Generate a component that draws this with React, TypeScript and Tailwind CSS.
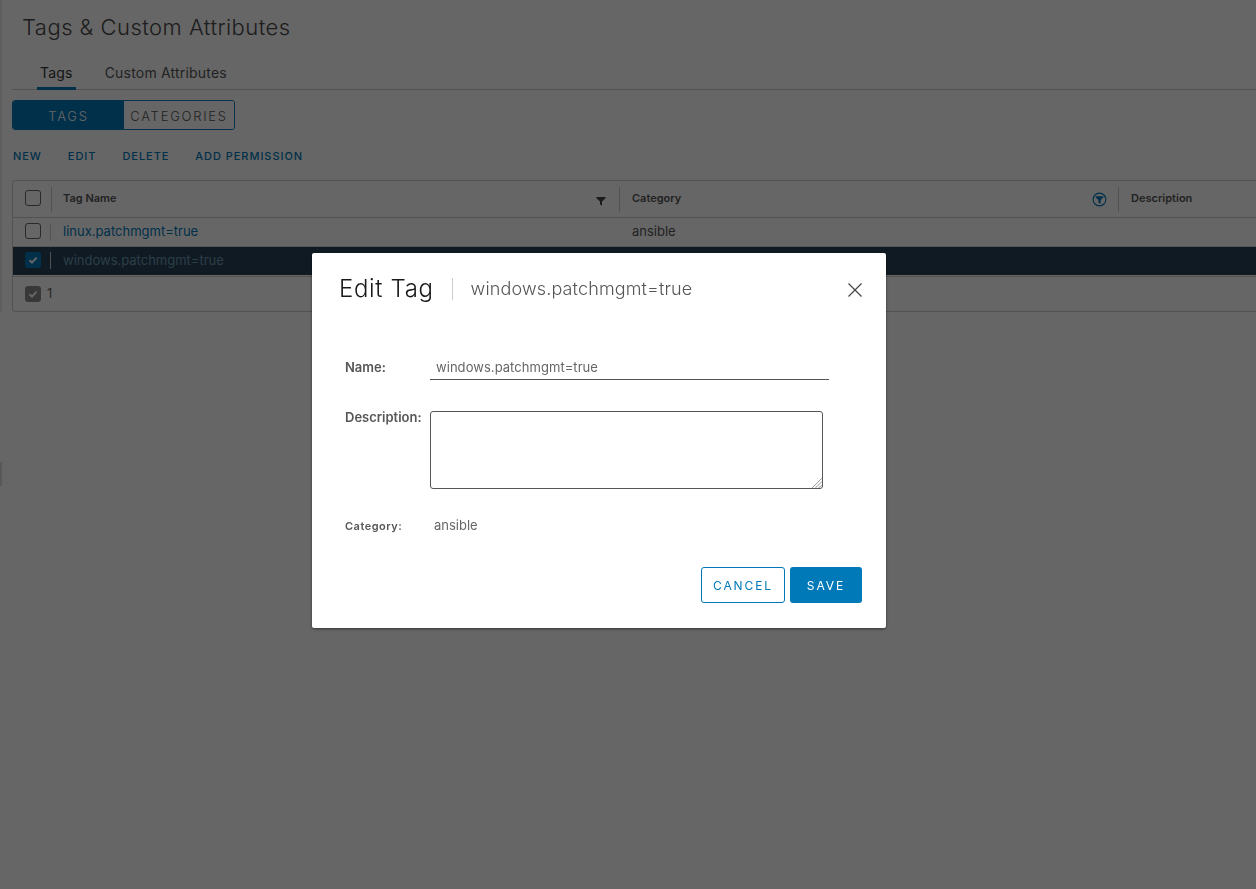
import React from 'react'

const font = { fontFamily: 'Inter, "Liberation Sans", sans-serif' }

function Checkbox({ checked = false, grey = false }: { checked?: boolean; grey?: boolean }) {
  if (!checked) {
    return <div className="h-4 w-4 rounded-[3px] border border-[#666] bg-white" />
  }
  return (
    <div className={`flex h-4 w-4 items-center justify-center rounded-[3px] ${grey ? 'bg-[#8c8c8c]' : 'bg-[#0079b8]'}`}>
      <svg viewBox="0 0 12 12" className="h-3 w-3" fill="none" stroke="#fff" strokeWidth="2">
        <path d="M2.5 6.2 5 8.6 9.6 3.6" />
      </svg>
    </div>
  )
}

function FunnelIcon() {
  return (
    <svg viewBox="0 0 10 10" className="mt-[4px] h-[10px] w-[10px]" fill="#444">
      <path d="M0.5 1h9v1.2L6 5.6V9.5L4 8.4V5.6L0.5 2.2z" />
    </svg>
  )
}

function ActiveFilterIcon() {
  return (
    <svg viewBox="0 0 16 16" className="h-[15px] w-[15px]">
      <circle cx="8" cy="8" r="6.8" fill="none" stroke="#0079b8" strokeWidth="1.2" />
      <path d="M3.8 4.6h8.4v1L9.2 8.6v4L6.8 11.4V8.6L3.8 5.6z" fill="#0079b8" />
    </svg>
  )
}

export default function App() {
  return (
    <div className="relative h-[889px] w-[1256px] overflow-hidden bg-white" style={font}>
      <div className="border-l-2 border-[#eee] pt-[14px] pl-[10px]">
        {/* Header */}
        <h1 className="ml-[10px] text-[22px] leading-[26px] font-light tracking-[0.47px] text-[#4a4a4a]">Tags &amp; Custom Attributes</h1>

        {/* Tabs */}
        <div className="mt-[16px] flex h-[34px] items-start gap-[29px] border-b border-[#ccc] pl-[25px] text-[14px] tracking-[0.2px]">
          <div className="flex h-[34px] flex-col items-center border-b-[3px] border-[#0079b8] px-[3px] pt-[6px] text-[#333]">Tags</div>
          <div className="pt-[6px] text-[#565656]">Custom Attributes</div>
        </div>

        {/* Toggle */}
        <div className="mt-[10px] flex h-[30px] w-[223px] overflow-hidden rounded-[3px] border border-[#0079b8] text-[13px] font-light tracking-[1.75px]">
          <div className="flex w-[111px] items-center justify-center bg-[#0079b8] pt-[3px] text-white">TAGS</div>
          <div className="flex flex-1 items-center justify-center bg-white pt-[3px] text-[#565656]">CATEGORIES</div>
        </div>

        {/* Actions */}
        <div className="mt-[19px] flex h-[14px] items-center gap-[26px] pl-[1px] text-[11px] font-medium tracking-[0.95px] text-[#0079b8]">
          <span>NEW</span>
          <span>EDIT</span>
          <span>DELETE</span>
          <span>ADD PERMISSION</span>
        </div>

        {/* Grid */}
        <div className="mt-[17px] h-[132px] w-[1260px] rounded-[3px] border border-[#ccc] bg-white text-[13px]">
          <div className="flex h-[37px] items-center border-b border-[#ccc] text-[11px] font-semibold text-[#565656]">
            <div className="mb-[3px] flex w-[38px] justify-center pl-[2px]"><Checkbox /></div>
            <div className="flex h-[25px] w-[568px] items-center justify-between border-l border-[#ccc] pr-[13px] pl-[11px]">
              <span className="mb-[2px]">Tag Name</span>
              <FunnelIcon />
            </div>
            <div className="flex h-[25px] w-[499px] items-center justify-between border-l border-[#ccc] pr-[11px] pl-[12px]">
              <span className="mb-[2px]">Category</span>
              <ActiveFilterIcon />
            </div>
            <div className="flex h-[25px] items-center border-l border-[#ccc] pl-[12px]">
              <span className="mb-[2px]">Description</span>
            </div>
          </div>

          <div className="flex h-[29px] items-center border-b border-[#ddd]">
            <div className="mb-[2px] flex w-[37px] justify-center pl-[3px]"><Checkbox /></div>
            <div className="flex h-[17px] w-[569px] items-center border-l border-[#ccc] pl-[12px] text-[#0079b8]">linux.patchmgmt=true</div>
            <div className="pl-[13px] text-[#565656]">ansible</div>
          </div>

          <div className="flex h-[28px] items-center bg-[#2a4355] pb-[1px]">
            <div className="mb-[1px] flex w-[37px] justify-center pl-[3px]"><Checkbox checked /></div>
            <div className="flex h-[17px] items-center border-l border-[#ccc] pl-[12px] text-[#6a9bb5]">windows.patchmgmt=true</div>
          </div>

          <div className="mt-px flex h-[35px] items-center border-t border-[#ccc] pl-[12px] text-[#666]">
            <Checkbox checked grey />
            <span className="ml-[6px]">1</span>
          </div>
        </div>
      </div>

      {/* Sidebar splitter handle */}
      <div className="absolute top-[462px] left-0 h-[24px] w-[2px] bg-[#ddd]" />

      {/* Modal backdrop */}
      <div className="fixed inset-0 bg-black/60 pt-[253px] pl-[312px]">
        <div className="h-[375px] w-[574px] rounded-[2px] bg-white px-[27px] pt-[22px] shadow-[0_1px_3px_rgba(0,0,0,0.5)]">
          <div className="flex h-[28px] items-center">
            <span className="text-[24px] font-light tracking-[0.65px] text-[#1a1a1a]">Edit Tag</span>
            <div className="mx-[18px] h-[22px] w-px bg-[#ccc]" />
            <span className="mb-[1px] text-[18px] font-light tracking-[0.14px] text-[#565656]">windows.patchmgmt=true</span>
            <svg viewBox="0 0 16 16" className="mt-[2px] mr-[-4px] ml-auto h-[16px] w-[16px]" fill="none" stroke="#444" strokeWidth="1.2">
              <path d="M1.5 1.5 14.5 14.5M14.5 1.5 1.5 14.5" />
            </svg>
          </div>

          <div className="mt-[47px] flex h-[30px] items-start pl-[6px]">
            <span className="w-[85px] pt-[8px] text-[13px] font-semibold text-[#565656]">Name:</span>
            <div className="h-[30px] w-[399px] border-b border-[#565656] pt-[8px] pl-[6px] text-[13px] tracking-[0.05px] text-[#666]">windows.patchmgmt=true</div>
          </div>

          <div className="mt-[31px] flex items-start pl-[6px]">
            <span className="w-[85px] text-[13px] leading-[13px] font-semibold text-[#565656]">Description:</span>
            <div className="relative h-[78px] w-[393px] rounded-[3px] border border-[#565656]">
              <svg viewBox="0 0 10 10" className="absolute right-0 bottom-0 h-[11px] w-[11px]" stroke="#888" strokeWidth="0.8">
                <path d="M1 10 10 1M4 10 10 4M7 10 10 7" />
              </svg>
            </div>
          </div>

          <div className="mt-[27px] flex items-center pl-[6px]">
            <span className="w-[89px] text-[11px] font-semibold tracking-[0.5px] text-[#565656]">Category:</span>
            <span className="text-[13px] text-[#666]">ansible</span>
          </div>

          <div className="mt-[31px] mr-[-3px] flex justify-end gap-[5px]">
            <button className="h-[36px] w-[84px] rounded-[3px] border border-[#0079b8] bg-white pt-[2px] text-[12px] font-normal tracking-[1.9px] text-[#0079b8]">CANCEL</button>
            <button className="h-[36px] w-[72px] rounded-[3px] bg-[#0079b8] pt-[2px] text-[12px] font-normal tracking-[1.9px] text-white">SAVE</button>
          </div>
        </div>
      </div>
    </div>
  )
}
